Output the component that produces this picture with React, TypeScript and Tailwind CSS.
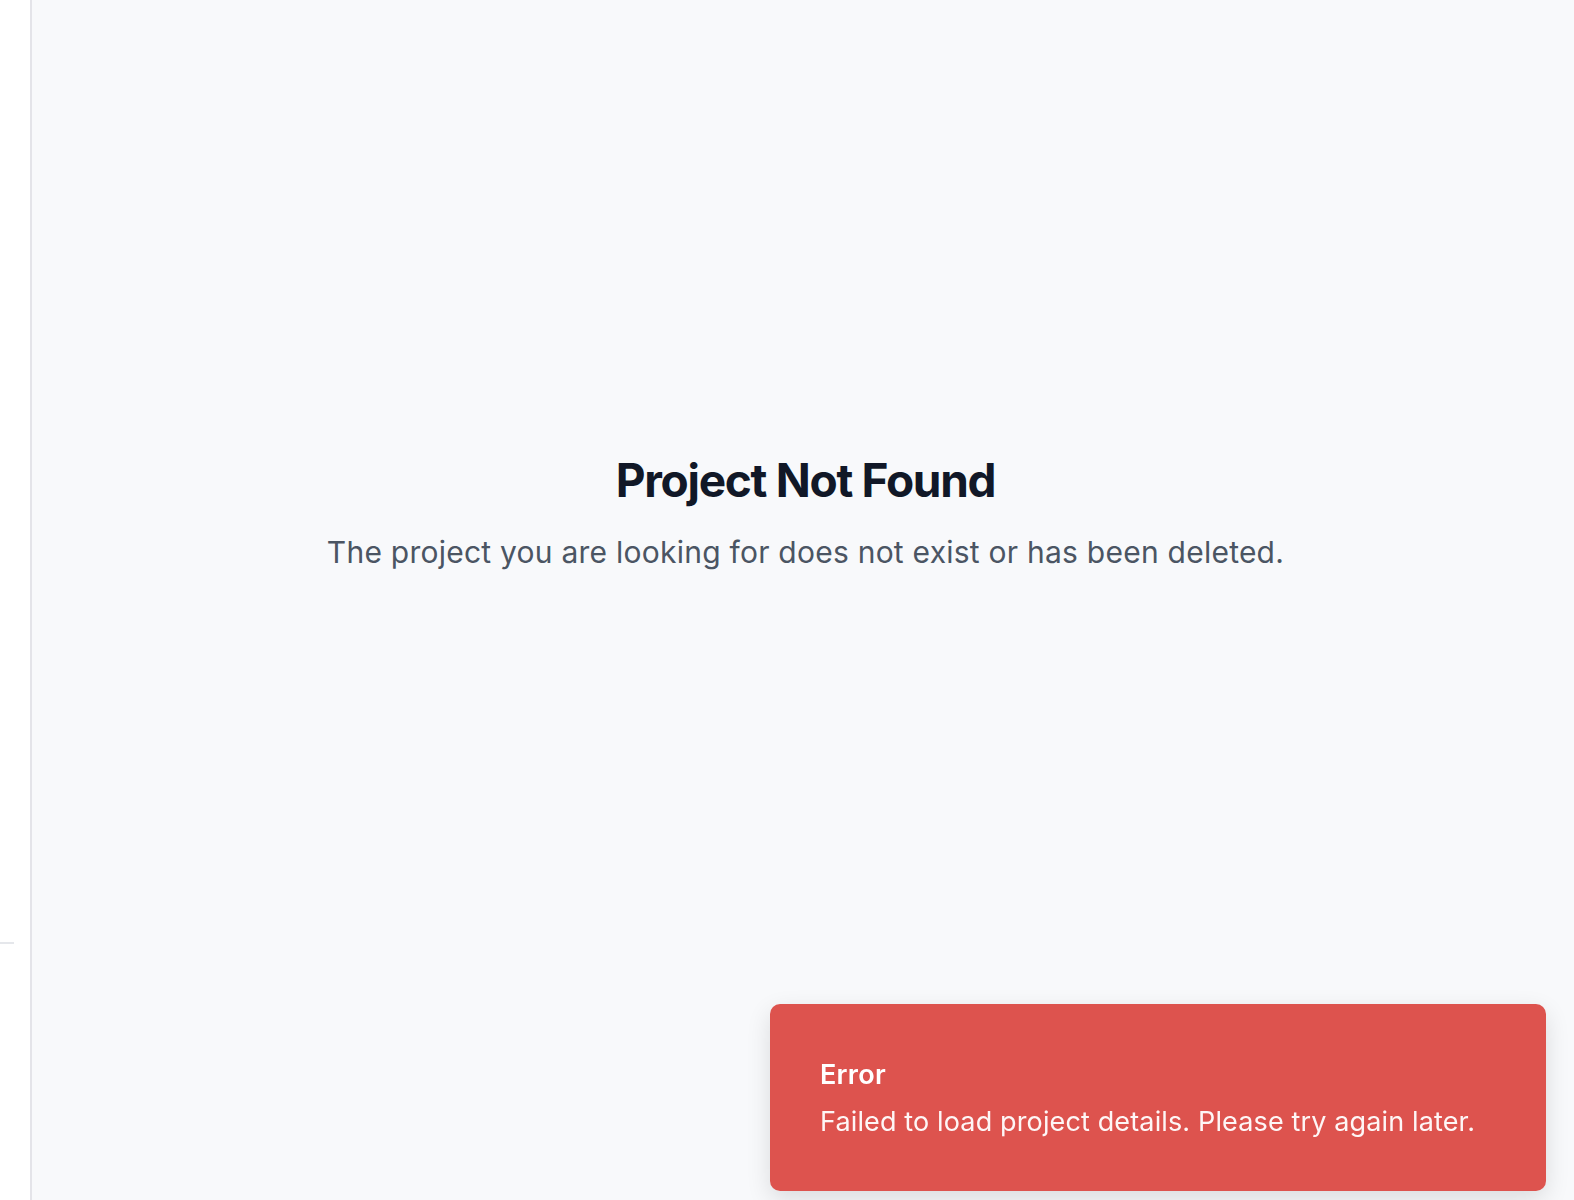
export default function App() {
  return (
    <div className="flex h-[1200px] w-full overflow-hidden font-['Inter',sans-serif]">
      <aside className="flex w-[32px] shrink-0 flex-col border-r-2 border-[#e4e4e9] bg-white">
        <div className="h-[942px]" />
        <div className="h-[2px] w-[14px] bg-[#e5e7eb]" />
      </aside>

      <main className="relative flex flex-1 flex-col items-center bg-[#f8f9fb] pl-[5px] pt-[457px]">
        <h1 className="text-[46px] font-bold leading-none tracking-[-0.028em] text-[#111827]">
          Project Not Found
        </h1>
        <p className="mt-[34px] text-[30px] leading-none tracking-[0.008em] text-[#4b5563]">
          The project you are looking for does not exist or has been deleted.
        </p>

        <div
          role="alert"
          className="fixed bottom-[9px] right-[28px] flex h-[187px] w-[776px] flex-col justify-center rounded-[10px] bg-[#dd534e] px-[50px] shadow-[0_8px_24px_rgba(0,0,0,0.12)]"
        >
          <div className="text-[27px] font-semibold leading-none tracking-[0.01em] text-white">
            Error
          </div>
          <div className="mt-[20px] text-[27px] leading-none tracking-[0.005em] text-white/95">
            Failed to load project details. Please try again later.
          </div>
        </div>
      </main>
    </div>
  );
}
